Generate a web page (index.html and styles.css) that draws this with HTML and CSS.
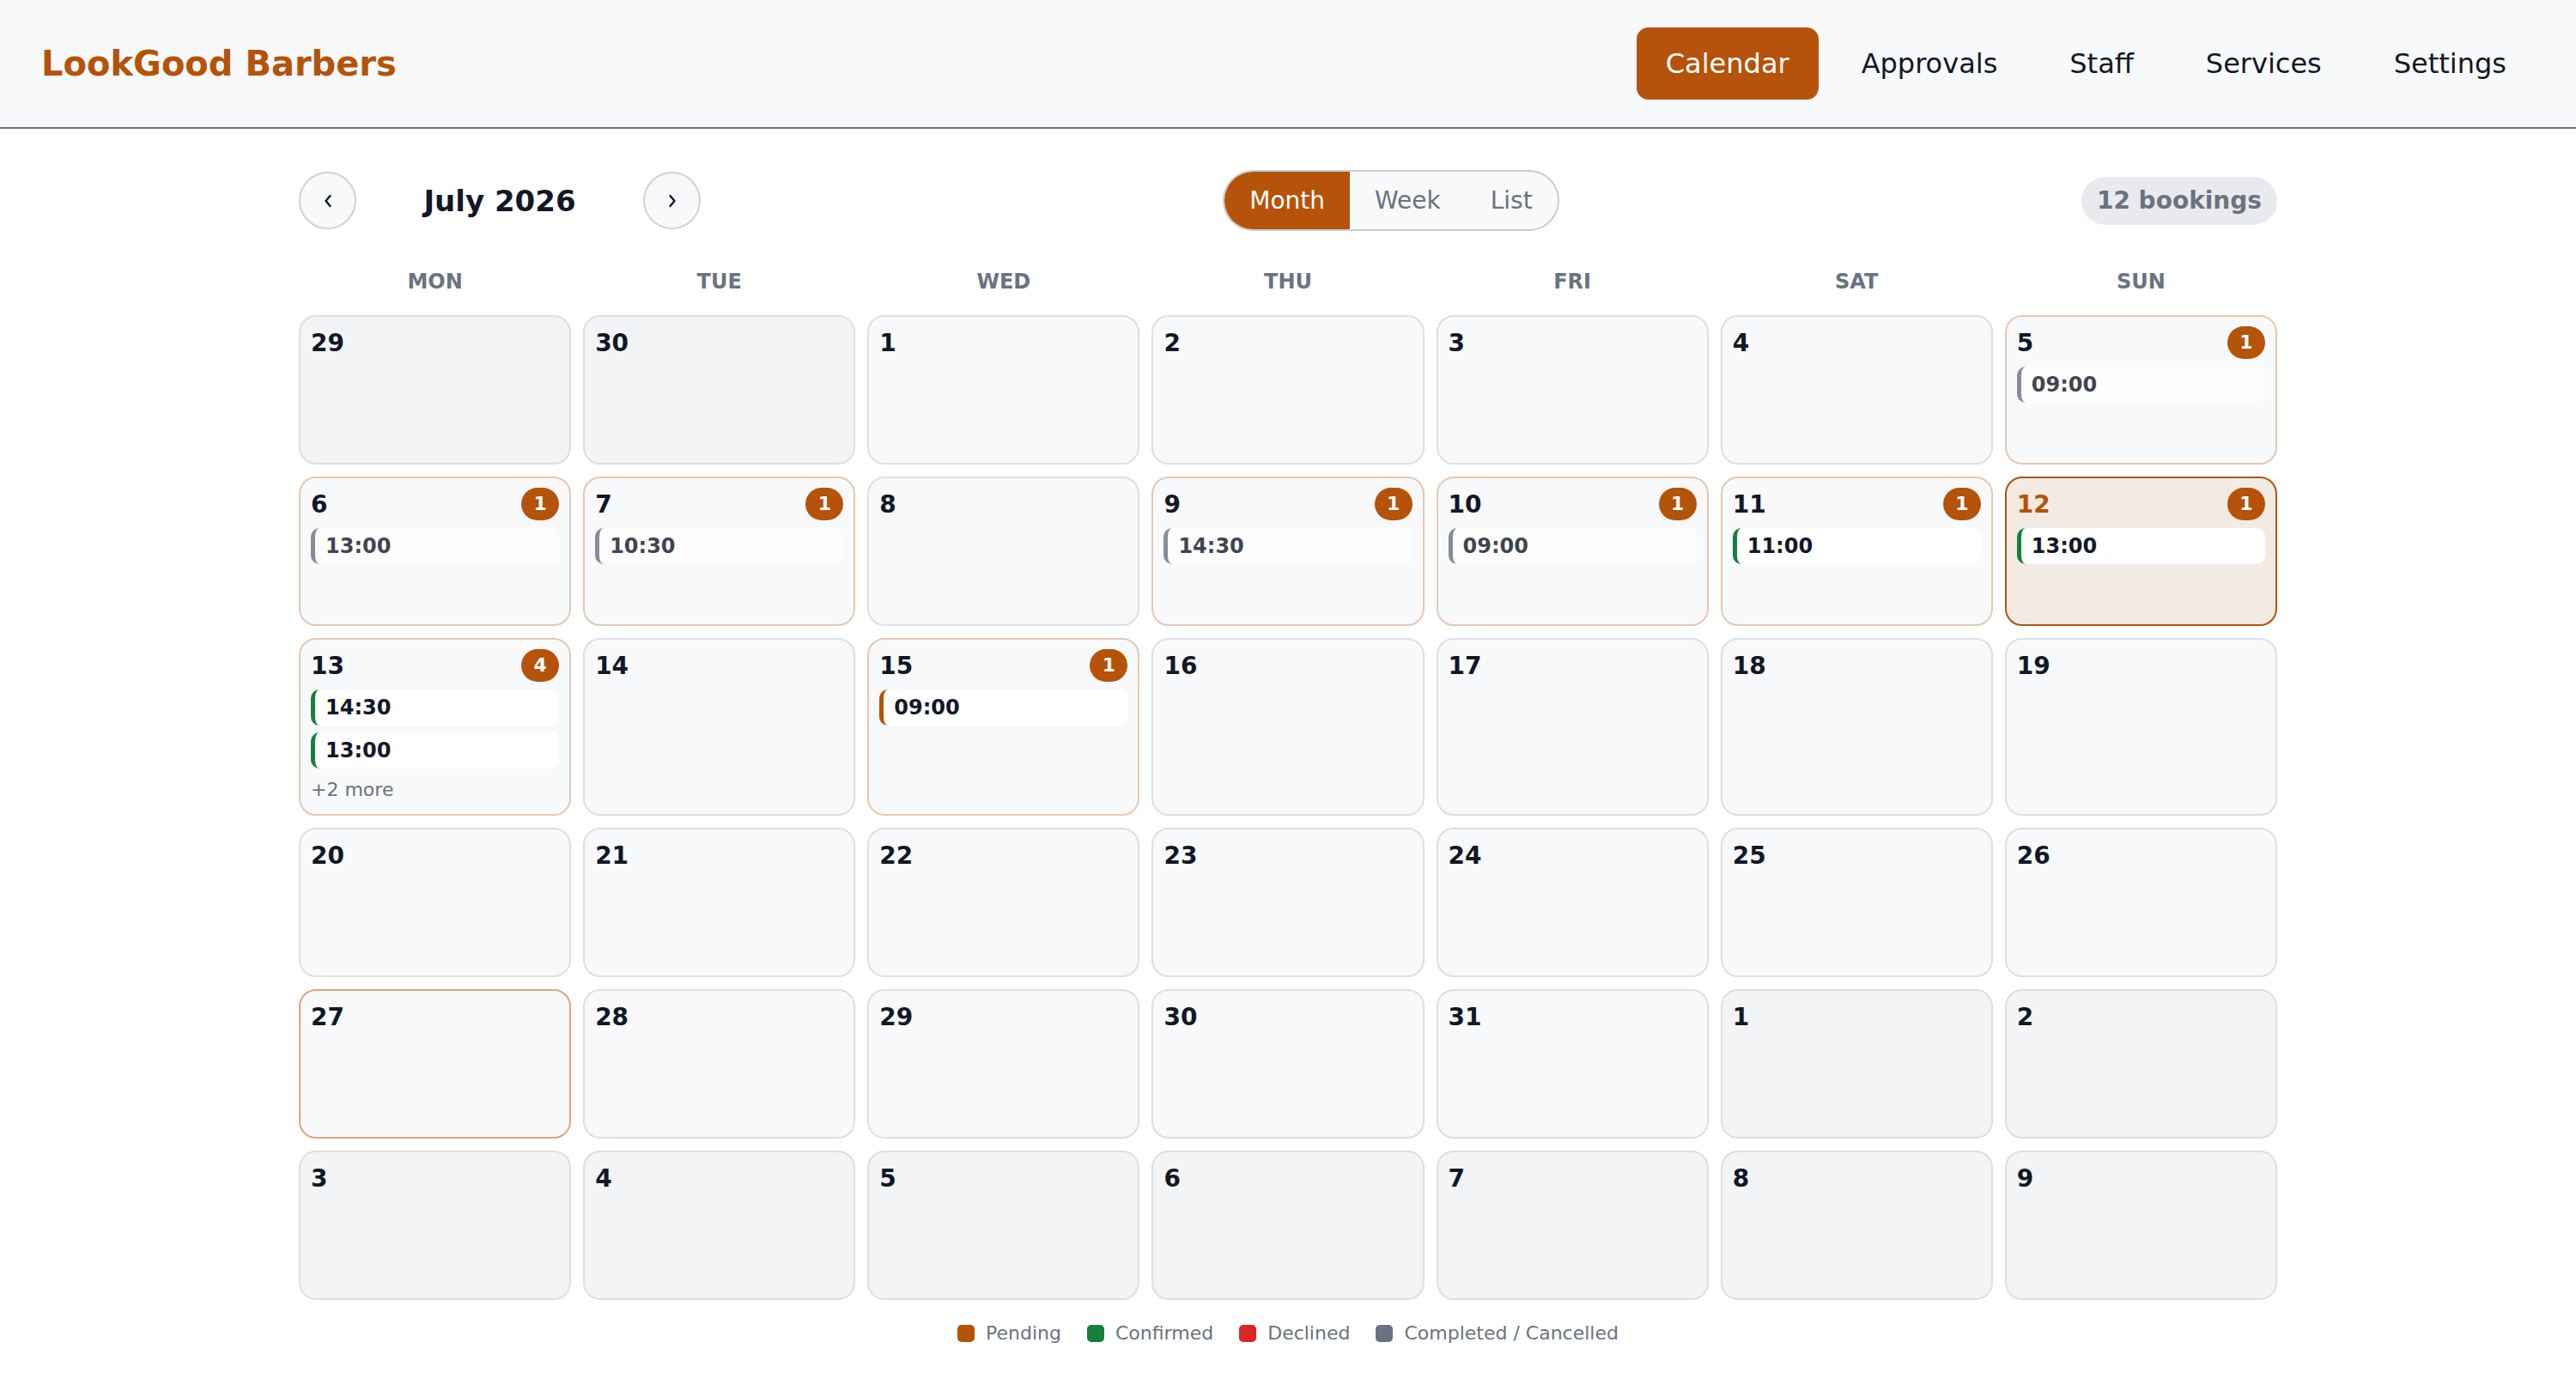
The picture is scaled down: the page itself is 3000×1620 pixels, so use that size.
FILE: index.html
```html
<!DOCTYPE html>
<html>
<head>
	<title>LookGood Barbers - Calendar</title>
	<link rel="stylesheet" href="styles.css">
</head>
<body>
	<header class="topbar">
		<div class="brand">LookGood Barbers</div>
		<nav class="nav">
			<a href="#" class="nav-link active">Calendar</a>
			<a href="#" class="nav-link">Approvals</a>
			<a href="#" class="nav-link">Staff</a>
			<a href="#" class="nav-link">Services</a>
			<a href="#" class="nav-link">Settings</a>
		</nav>
	</header>

	<main class="page">
		<div class="toolbar">
			<div class="month-nav">
				<button class="circle-btn" aria-label="Previous month">
					<svg width="10" height="16" viewBox="0 0 10 16"><polyline points="7.5,2 2.5,8 7.5,14" fill="none" stroke="#111827" stroke-width="2.4" stroke-linecap="round" stroke-linejoin="round"/></svg>
				</button>
				<h2 class="month-title">July 2026</h2>
				<button class="circle-btn" aria-label="Next month">
					<svg width="10" height="16" viewBox="0 0 10 16"><polyline points="2.5,2 7.5,8 2.5,14" fill="none" stroke="#111827" stroke-width="2.4" stroke-linecap="round" stroke-linejoin="round"/></svg>
				</button>
			</div>
			<div class="segmented">
				<button class="seg active">Month</button>
				<button class="seg">Week</button>
				<button class="seg">List</button>
			</div>
			<div class="count-pill">12 bookings</div>
		</div>

		<div class="weekdays">
			<div>MON</div><div>TUE</div><div>WED</div><div>THU</div><div>FRI</div><div>SAT</div><div>SUN</div>
		</div>

		<div class="month-grid">
			<!-- week 1 -->
			<div class="day other"><div class="day-head"><span class="day-num">29</span></div></div>
			<div class="day other"><div class="day-head"><span class="day-num">30</span></div></div>
			<div class="day"><div class="day-head"><span class="day-num">1</span></div></div>
			<div class="day"><div class="day-head"><span class="day-num">2</span></div></div>
			<div class="day"><div class="day-head"><span class="day-num">3</span></div></div>
			<div class="day"><div class="day-head"><span class="day-num">4</span></div></div>
			<div class="day booked">
				<div class="day-head"><span class="day-num">5</span><span class="badge">1</span></div>
				<div class="chip done">09:00</div>
			</div>

			<!-- week 2 -->
			<div class="day booked">
				<div class="day-head"><span class="day-num">6</span><span class="badge">1</span></div>
				<div class="chip done">13:00</div>
			</div>
			<div class="day booked">
				<div class="day-head"><span class="day-num">7</span><span class="badge">1</span></div>
				<div class="chip done">10:30</div>
			</div>
			<div class="day"><div class="day-head"><span class="day-num">8</span></div></div>
			<div class="day booked">
				<div class="day-head"><span class="day-num">9</span><span class="badge">1</span></div>
				<div class="chip done">14:30</div>
			</div>
			<div class="day booked">
				<div class="day-head"><span class="day-num">10</span><span class="badge">1</span></div>
				<div class="chip done">09:00</div>
			</div>
			<div class="day booked">
				<div class="day-head"><span class="day-num">11</span><span class="badge">1</span></div>
				<div class="chip confirmed">11:00</div>
			</div>
			<div class="day booked today">
				<div class="day-head"><span class="day-num">12</span><span class="badge">1</span></div>
				<div class="chip confirmed">13:00</div>
			</div>

			<!-- week 3 -->
			<div class="day booked">
				<div class="day-head"><span class="day-num">13</span><span class="badge">4</span></div>
				<div class="chip confirmed">14:30</div>
				<div class="chip confirmed">13:00</div>
				<div class="more">+2 more</div>
			</div>
			<div class="day"><div class="day-head"><span class="day-num">14</span></div></div>
			<div class="day booked">
				<div class="day-head"><span class="day-num">15</span><span class="badge">1</span></div>
				<div class="chip pending">09:00</div>
			</div>
			<div class="day"><div class="day-head"><span class="day-num">16</span></div></div>
			<div class="day"><div class="day-head"><span class="day-num">17</span></div></div>
			<div class="day"><div class="day-head"><span class="day-num">18</span></div></div>
			<div class="day"><div class="day-head"><span class="day-num">19</span></div></div>

			<!-- week 4 -->
			<div class="day"><div class="day-head"><span class="day-num">20</span></div></div>
			<div class="day"><div class="day-head"><span class="day-num">21</span></div></div>
			<div class="day"><div class="day-head"><span class="day-num">22</span></div></div>
			<div class="day"><div class="day-head"><span class="day-num">23</span></div></div>
			<div class="day"><div class="day-head"><span class="day-num">24</span></div></div>
			<div class="day"><div class="day-head"><span class="day-num">25</span></div></div>
			<div class="day"><div class="day-head"><span class="day-num">26</span></div></div>

			<!-- week 5 -->
			<div class="day selected"><div class="day-head"><span class="day-num">27</span></div></div>
			<div class="day"><div class="day-head"><span class="day-num">28</span></div></div>
			<div class="day"><div class="day-head"><span class="day-num">29</span></div></div>
			<div class="day"><div class="day-head"><span class="day-num">30</span></div></div>
			<div class="day"><div class="day-head"><span class="day-num">31</span></div></div>
			<div class="day other"><div class="day-head"><span class="day-num">1</span></div></div>
			<div class="day other"><div class="day-head"><span class="day-num">2</span></div></div>

			<!-- week 6 -->
			<div class="day other"><div class="day-head"><span class="day-num">3</span></div></div>
			<div class="day other"><div class="day-head"><span class="day-num">4</span></div></div>
			<div class="day other"><div class="day-head"><span class="day-num">5</span></div></div>
			<div class="day other"><div class="day-head"><span class="day-num">6</span></div></div>
			<div class="day other"><div class="day-head"><span class="day-num">7</span></div></div>
			<div class="day other"><div class="day-head"><span class="day-num">8</span></div></div>
			<div class="day other"><div class="day-head"><span class="day-num">9</span></div></div>
		</div>

		<div class="legend">
			<div class="legend-item"><span class="swatch pending"></span>Pending</div>
			<div class="legend-item"><span class="swatch confirmed"></span>Confirmed</div>
			<div class="legend-item"><span class="swatch declined"></span>Declined</div>
			<div class="legend-item"><span class="swatch done"></span>Completed / Cancelled</div>
		</div>
	</main>
</body>
</html>
```

FILE: styles.css
```css
body {
	margin: 0;
	font-family: "DejaVu Sans", Verdana, sans-serif;
	color: #111827;
	background: #fff;
}

/* top bar */
.topbar {
	display: flex;
	justify-content: space-between;
	align-items: center;
	height: 148px;
	padding: 0 47px 0 48px;
	background: #f8f9fb;
	border-bottom: 2px solid #6b7280;
}
.brand {
	font-size: 40px;
	font-weight: bold;
	color: #b45309;
}
.nav {
	display: flex;
	gap: 16px;
}
.nav-link {
	font-size: 32px;
	line-height: 38px;
	padding: 23px 34px;
	border-radius: 14px;
	color: #111827;
	text-decoration: none;
}
.nav-link.active {
	background: #b45309;
	color: #fff;
}

/* page */
.page {
	max-width: 2304px;
	margin: 0 auto;
	padding-top: 48px;
}
.toolbar {
	display: flex;
	justify-content: space-between;
	align-items: center;
}
.month-nav {
	display: flex;
	align-items: center;
	gap: 14px;
}
.circle-btn {
	width: 67px;
	height: 67px;
	border-radius: 50%;
	border: 2px solid #cfd2d7;
	background: #f8f9fb;
	display: flex;
	align-items: center;
	justify-content: center;
	padding: 0;
}
.month-title {
	width: 306px;
	margin: 0;
	text-align: center;
	font-size: 34px;
	font-weight: bold;
}
.segmented {
	display: flex;
	border: 2px solid #c9ccd1;
	border-radius: 999px;
	overflow: hidden;
	background: #f8f9fb;
}
.seg {
	font-family: inherit;
	font-size: 28px;
	line-height: 33px;
	padding: 17px 29px;
	border: none;
	background: none;
	color: #6b7280;
}
.seg.active {
	background: #b45309;
	color: #fff;
}
.count-pill {
	background: #e9eaed;
	color: #6b7280;
	font-size: 28px;
	font-weight: bold;
	line-height: 32px;
	padding: 12px 18px;
	border-radius: 999px;
}

/* calendar */
.weekdays {
	display: grid;
	grid-template-columns: repeat(7, 1fr);
	gap: 14px;
	margin: 45px 0 25px;
	text-align: center;
	font-size: 24px;
	line-height: 28px;
	font-weight: bold;
	color: #6b7280;
}
.month-grid {
	display: grid;
	grid-template-columns: repeat(7, 1fr);
	grid-auto-rows: minmax(174px, auto);
	gap: 14px;
}
.day {
	display: flex;
	flex-direction: column;
	gap: 9px;
	padding: 11px 12px 12px;
	border: 2px solid #dcdfe3;
	border-radius: 20px;
	background: #f8f9fb;
}
.day.other {
	background: #f3f4f6;
}
.day.booked {
	border-color: #e6c8b2;
}
.day.selected {
	border-color: #dba683;
}
.day.today {
	background: #f2ebe4;
	border-color: #b45309;
}
.day-head {
	display: flex;
	justify-content: space-between;
	align-items: center;
	min-height: 38px;
}
.day-num {
	font-size: 28px;
	font-weight: bold;
}
.today .day-num {
	color: #b45309;
}
.badge {
	min-width: 44px;
	height: 38px;
	line-height: 38px;
	border-radius: 19px;
	background: #b45309;
	color: #fff;
	font-size: 22px;
	font-weight: bold;
	text-align: center;
}
.chip {
	height: 42px;
	line-height: 42px;
	padding: 0 12px;
	background: #fff;
	border-left: 5px solid #6b7280;
	border-radius: 10px;
	font-size: 24px;
	font-weight: bold;
}
.chip + .chip {
	margin-top: -1px;
}
.chip.done {
	opacity: 0.8;
}
.chip.confirmed {
	border-left-color: #15803d;
}
.chip.pending {
	border-left-color: #b45309;
}
.more {
	font-size: 22px;
	line-height: 32px;
	color: #6b7280;
}

/* legend */
.legend {
	display: flex;
	justify-content: center;
	gap: 30px;
	margin-top: 26px;
	font-size: 22px;
	line-height: 26px;
	color: #6b7280;
}
.legend-item {
	display: flex;
	align-items: center;
	gap: 13px;
}
.swatch {
	width: 20px;
	height: 20px;
	border-radius: 5px;
}
.swatch.pending { background: #b45309; }
.swatch.confirmed { background: #15803d; }
.swatch.declined { background: #dc2626; }
.swatch.done { background: #6b7280; }
```
